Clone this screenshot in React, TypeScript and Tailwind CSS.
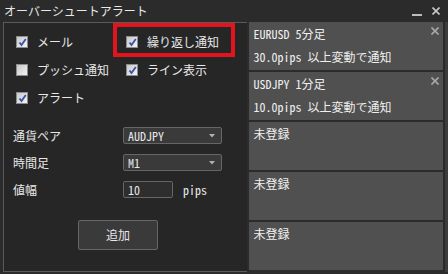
const jp = "font-['Noto_Sans_CJK_JP',sans-serif]";
const hw = "font-['Noto_Sans_CJK_JP',sans-serif] [font-feature-settings:'hwid']";

function Check({ checked }: { checked: boolean }) {
  return (
    <div className="w-[12px] h-[12px] border border-[#8c8c8c] bg-gradient-to-br from-[#c8c8c8] to-[#f4f4f4] flex items-center justify-center">
      {checked && (
        <svg width="9" height="9" viewBox="0 0 9 9">
          <path d="M1.5 4.5 L3.5 7 L7.8 1" fill="none" stroke="#3552a8" strokeWidth="1.8" />
        </svg>
      )}
    </div>
  );
}

function CheckItem({ label, checked }: { label: string; checked: boolean }) {
  return (
    <div className="flex items-center gap-[9px] h-[28px]">
      <Check checked={checked} />
      <span className={`${jp} text-[12px] text-[#e8e8e8]`}>{label}</span>
    </div>
  );
}

function Select({ value }: { value: string }) {
  return (
    <div className="w-[99px] h-[17px] bg-[#3a3a3a] border border-[#666] rounded-[2px] flex items-center justify-between pl-[4px] pr-[6px]">
      <span className={`${hw} text-[12px] text-[#e8e8e8] leading-none`}>{value}</span>
      <svg width="6" height="4" viewBox="0 0 6 4">
        <path d="M0 0 H6 L3 3.5 Z" fill="#b0b0b0" />
      </svg>
    </div>
  );
}

function Card({ title, sub }: { title: string; sub?: string }) {
  return (
    <div className="relative h-[48px] bg-[#505050] pl-[4px] pt-[3px] flex flex-col">
      <span className={`${hw} text-[12px] text-[#f0f0f0] leading-[18px]`}>{title}</span>
      {sub && <span className={`${hw} text-[12px] text-[#f0f0f0] leading-[18px] mt-[5px]`}>{sub}</span>}
      {sub && (
        <svg className="absolute right-[4px] top-[5px]" width="8" height="8" viewBox="0 0 8 8">
          <path d="M0.5 0.5 L7.5 7.5 M7.5 0.5 L0.5 7.5" stroke="#a8a8a8" strokeWidth="1.6" />
        </svg>
      )}
    </div>
  );
}

export default function App() {
  return (
    <div className="w-[448px] h-[274px] bg-[#2b2b2b] flex flex-col overflow-hidden">
      {/* Title bar */}
      <div className="h-[22px] flex items-center justify-between pl-[4px] pr-[8px]">
        <span className={`${jp} text-[12px] text-[#e8e8e8]`}>オーバーシュートアラート</span>
        <div className="flex items-center gap-[10px]">
          <div className="w-[10px] h-[2px] bg-[#bdbdbd] mt-[8px]" />
          <svg width="8" height="8" viewBox="0 0 8 8">
            <path d="M0.5 0.5 L7.5 7.5 M7.5 0.5 L0.5 7.5" stroke="#c8c8c8" strokeWidth="1.6" />
          </svg>
        </div>
      </div>

      <div className="flex pl-[3px] gap-[2px]">
        {/* Left panel */}
        <div className="relative w-[245px] h-[250px] bg-[#262626] border-l border-t border-b border-[#5a5a5a] flex flex-col">
          <div className="grid grid-cols-[110px_1fr] pl-[12px] pt-[5px]">
            <CheckItem label="メール" checked />
            <CheckItem label="繰り返し通知" checked />
            <CheckItem label="プッシュ通知" checked={false} />
            <CheckItem label="ライン表示" checked />
            <CheckItem label="アラート" checked />
          </div>

          <div className="absolute left-[109px] top-[0px] w-[122px] h-[34px] border-[4px] border-[#e3141e]" />

          <div className="flex flex-col gap-[10px] pl-[9px] mt-[15px]">
            <div className="flex items-center h-[17px]">
              <span className={`${jp} text-[12px] text-[#e8e8e8] w-[110px]`}>通貨ペア</span>
              <Select value="AUDJPY" />
            </div>
            <div className="flex items-center h-[17px]">
              <span className={`${jp} text-[12px] text-[#e8e8e8] w-[110px]`}>時間足</span>
              <Select value="M1" />
            </div>
            <div className="flex items-center h-[17px]">
              <span className={`${jp} text-[12px] text-[#e8e8e8] w-[110px]`}>値幅</span>
              <div className="w-[50px] h-[17px] bg-[#2e2e2e] border border-[#666] rounded-[2px] flex items-center pl-[4px]">
                <span className={`${hw} text-[12px] text-[#e8e8e8] leading-none`}>10</span>
              </div>
              <span className={`${hw} text-[12px] text-[#e8e8e8] ml-[10px]`}>pips</span>
            </div>
          </div>

          <div className="pl-[74px] mt-[22px]">
            <div className="w-[80px] h-[30px] bg-[#3a3a3a] border border-[#666] rounded-[2px] flex items-center justify-center">
              <span className={`${jp} text-[12px] text-[#e8e8e8]`}>追加</span>
            </div>
          </div>
        </div>

        {/* Alert list */}
        <div className="w-[194px] flex flex-col gap-[2px]">
          <Card title="EURUSD 5分足" sub="30.0pips 以上変動で通知" />
          <Card title="USDJPY 1分足" sub="10.0pips 以上変動で通知" />
          <Card title="未登録" />
          <Card title="未登録" />
          <Card title="未登録" />
        </div>
        <div className="w-[3px] h-[250px] bg-[#3c3c3c]" />
      </div>
    </div>
  );
}
